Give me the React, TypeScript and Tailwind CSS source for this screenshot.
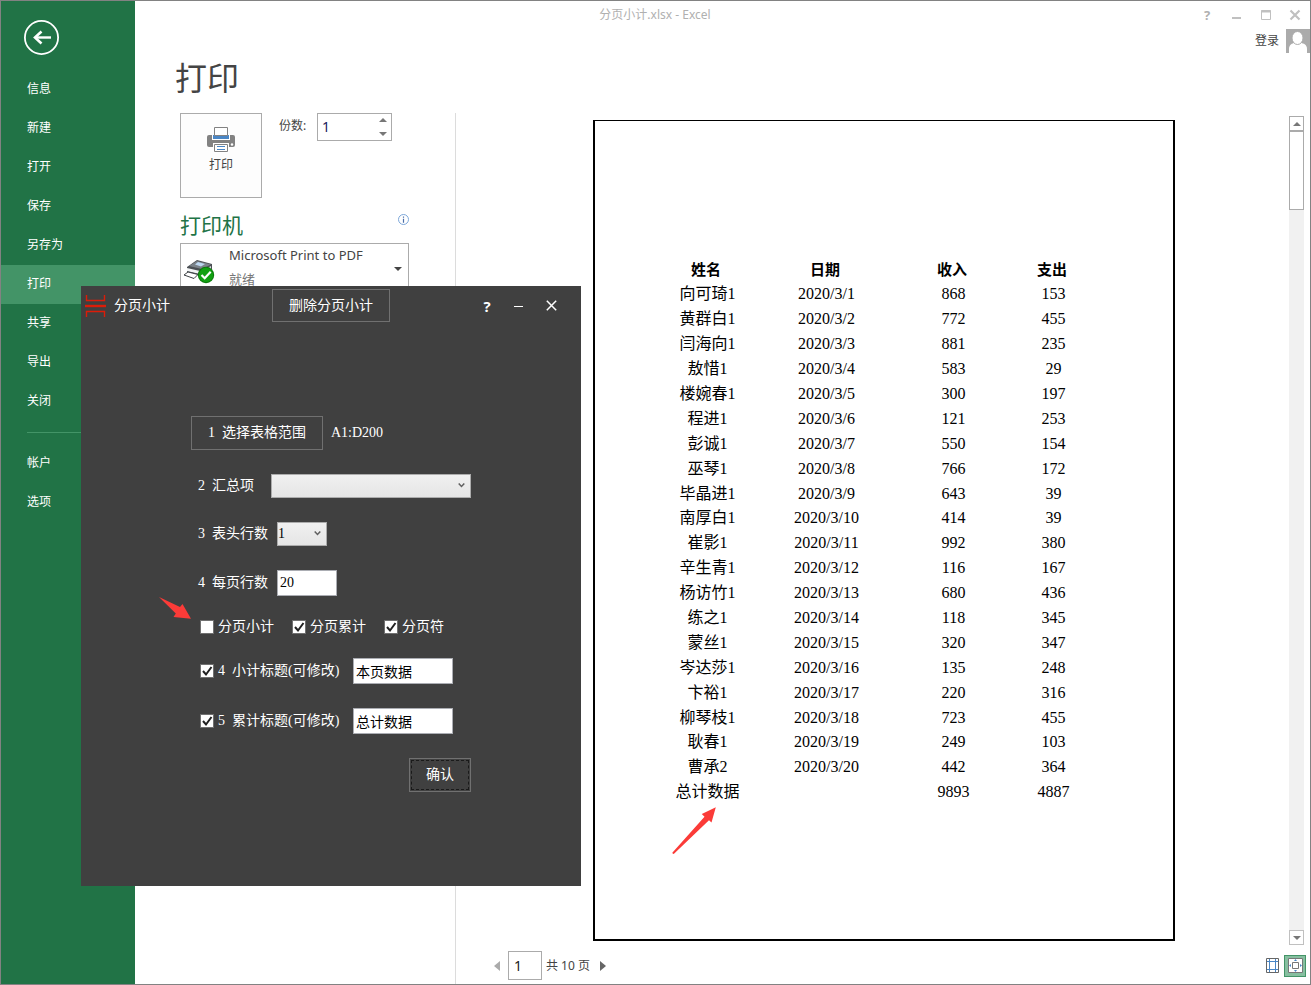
import { useState } from "react";
import type { ReactNode } from "react";

const menu = ["信息", "新建", "打开", "保存", "另存为", "打印", "共享", "导出", "关闭"];
const accountMenu = ["帐户", "选项"];

const rows = [
  ["向可琦1", "2020/3/1", "868", "153"],
  ["黄群白1", "2020/3/2", "772", "455"],
  ["闫海向1", "2020/3/3", "881", "235"],
  ["敖惜1", "2020/3/4", "583", "29"],
  ["楼婉春1", "2020/3/5", "300", "197"],
  ["程进1", "2020/3/6", "121", "253"],
  ["彭诚1", "2020/3/7", "550", "154"],
  ["巫琴1", "2020/3/8", "766", "172"],
  ["毕晶进1", "2020/3/9", "643", "39"],
  ["南厚白1", "2020/3/10", "414", "39"],
  ["崔影1", "2020/3/11", "992", "380"],
  ["辛生青1", "2020/3/12", "116", "167"],
  ["杨访竹1", "2020/3/13", "680", "436"],
  ["练之1", "2020/3/14", "118", "345"],
  ["蒙丝1", "2020/3/15", "320", "347"],
  ["岑达莎1", "2020/3/16", "135", "248"],
  ["卞裕1", "2020/3/17", "220", "316"],
  ["柳琴枝1", "2020/3/18", "723", "455"],
  ["耿春1", "2020/3/19", "249", "103"],
  ["曹承2", "2020/3/20", "442", "364"],
  ["总计数据", "", "9893", "4887"],
];

function MenuItem({ label, active }: { label: string; active?: boolean }) {
  return (
    <a
      href="#"
      aria-current={active ? "page" : undefined}
      className={`flex h-[39px] items-center pb-[2px] pl-[26px] text-xs text-white ${active ? "bg-[#439467]" : ""}`}
    >
      {label}
    </a>
  );
}

function Sidebar() {
  return (
    <aside className="w-[134px] shrink-0 bg-[#217346] pt-[19px]">
      <button aria-label="返回" className="mb-[14px] ml-[23px] block">
        <svg width="36" height="36" viewBox="0 0 36 36" fill="none" stroke="#fff">
          <circle cx="17.5" cy="17.5" r="16.6" strokeWidth="1.8" />
          <path d="M27 17.5H11.5" strokeWidth="2.4" />
          <path d="M17.5 11.5L11 17.5L17.5 23.5" strokeWidth="2.6" />
        </svg>
      </button>
      <nav>
        {menu.map((m) => (
          <MenuItem key={m} label={m} active={m === "打印"} />
        ))}
        <hr className="my-[11px] ml-[26px] mr-[25px] border-[#439467]" />
        {accountMenu.map((m) => (
          <MenuItem key={m} label={m} />
        ))}
      </nav>
    </aside>
  );
}

function TitleBar() {
  return (
    <header className="grid h-7 grid-cols-[1fr_135px] items-center text-[#b0b0b0]">
      <div className="text-center text-xs">分页小计.xlsx - Excel</div>
      <div className="flex items-center justify-between pl-[26px] pr-[9px]">
        <button aria-label="帮助" className="w-3 text-[13px] leading-4 font-bold">?</button>
        <button aria-label="最小化">
          <svg width="13" height="12" viewBox="0 0 13 12"><path d="M2 8h9v2H2z" fill="#c0c0c0" /></svg>
        </button>
        <button aria-label="最大化">
          <svg width="12" height="12" viewBox="0 0 12 12" fill="none" stroke="#c0c0c0">
            <path d="M1.5 1.5h9v9h-9z" />
            <path d="M1 2.5h10" strokeWidth="2" />
          </svg>
        </button>
        <button aria-label="关闭窗口">
          <svg width="12" height="12" viewBox="0 0 12 12" stroke="#c0c0c0" strokeWidth="2.2">
            <path d="M1.5 1.5l9 9M10.5 1.5l-9 9" />
          </svg>
        </button>
      </div>
    </header>
  );
}

function PrinterIcon() {
  return (
    <svg width="28" height="26" viewBox="0 0 28 26">
      <rect x="0" y="8" width="28" height="12" rx="2" fill="#828282" />
      <path d="M5 7h18v6H5z" fill="#fff" />
      <path d="M6 8h16v4H6z" fill="#4a86c5" />
      <path d="M7.5.5h13v8h-13z" fill="#fff" stroke="#828282" />
      <circle cx="25" cy="17.5" r="1.2" fill="#fff" />
      <path d="M6 16h16v10H6z" fill="#fff" />
      <path d="M7.5 17.5h13v7h-13z" fill="#fff" stroke="#828282" />
      <path d="M10 19.5h8M10 22.5h8" stroke="#4a86c5" />
    </svg>
  );
}

function DeviceIcon() {
  return (
    <svg width="32" height="25" viewBox="0 0 32 25" className="mt-[6px]">
      <path d="M3 7L13 0l15 4v5l-11 7L3 12z" fill="#4b4f54" />
      <path d="M5 6l8-5 14 3.5L18 9z" fill="#7b8288" />
      <path d="M11 4.500l3-2.500 7 2-4 2.500z" fill="#bcd6f0" />
      <path d="M3 8l13 3v3L3 11z" fill="#f2f4f5" />
      <path d="M0 15l4-3 10 2.500-4 4z" fill="#fff" stroke="#3c4044" />
      <path d="M17 11l10-5v3l-10 6z" fill="#d7dadd" />
      <circle cx="22" cy="15" r="8.200" fill="#0b7a0b" />
      <circle cx="22" cy="15" r="7.200" fill="#12a012" />
      <path d="M17.500 15l3.200 3.200 6-6.400" fill="none" stroke="#fff" strokeWidth="2.200" />
    </svg>
  );
}

function Triangle({ d, color }: { d: "up" | "down" | "left" | "right"; color: string }) {
  const paths = { up: "M0 4L4 0L8 4z", down: "M0 0h8L4 4z", left: "M6 0v10L0 5z", right: "M0 0v10L6 5z" };
  const side = d === "left" || d === "right";
  return (
    <svg width={side ? 6 : 8} height={side ? 10 : 4} fill={color}>
      <path d={paths[d]} />
    </svg>
  );
}

function Settings() {
  const [copies, setCopies] = useState(1);
  return (
    <section className="w-[321px] shrink-0 border-r border-[#dcdcdc] pl-[45px]">
      <div className="flex items-start">
        <button className="flex h-[85px] w-[82px] flex-col items-center border border-[#ababab] bg-[#fdfdfd] pt-[13px] text-xs text-[#444]">
          <PrinterIcon />
          <span className="mt-1">打印</span>
        </button>
        <label htmlFor="copies" className="ml-[17px] mt-[5px] w-[38px] text-xs text-[#444]">份数:</label>
        <div className="flex h-7 w-[75px] border border-[#ababab]">
          <input
            id="copies"
            value={copies}
            onChange={(e) => setCopies(Number(e.target.value) || 1)}
            className="w-0 flex-1 pl-1 text-sm text-[#1a1a5c] outline-none"
          />
          <div className="flex w-4 flex-col items-center justify-between py-1">
            <button aria-label="增加" onClick={() => setCopies(copies + 1)} className="flex"><Triangle d="up" color="#777" /></button>
            <button aria-label="减少" onClick={() => setCopies(Math.max(1, copies - 1))} className="flex"><Triangle d="down" color="#777" /></button>
          </div>
        </div>
      </div>
      <div className="mt-[11px] flex h-8 w-[229px] items-center justify-between">
        <h2 className="text-[21px] leading-8 text-[#217346]">打印机</h2>
        <svg width="11" height="11" viewBox="0 0 11 11" fill="none" className="mb-3">
          <circle cx="5.5" cy="5.5" r="5" stroke="#7da7d9" />
          <path d="M5.5 2.5v1.2M5.5 4.8v4" stroke="#4a6ea9" strokeWidth="1.2" />
        </svg>
      </div>
      <button aria-haspopup="listbox" className="mt-[2px] flex h-[52px] w-[229px] items-center border border-[#ababab] pl-[3px] pr-[6px] text-left text-[#444]">
        <DeviceIcon />
        <span className="ml-[13px] flex-1 pb-1">
          <span className="block text-[13px] leading-6">Microsoft Print to PDF</span>
          <span className="block text-[13px] leading-6 text-[#777]">就绪</span>
        </span>
        <Triangle d="down" color="#444" />
      </button>
    </section>
  );
}

function Sheet() {
  return (
    <div className="relative mx-auto w-[582px] border-2 border-t border-black bg-white pt-[137px] font-['Liberation_Serif','Noto_Sans_CJK_SC',serif] text-base leading-6 text-black">
      <table className="ml-[71px] h-[547px] w-[438px] table-fixed text-center">
        <colgroup>
          <col className="w-[84px]" />
          <col className="w-[154px]" />
          <col className="w-[100px]" />
          <col className="w-[100px]" />
        </colgroup>
        <thead>
          <tr>
            {["姓名", "日期", "收入", "支出"].map((h) => (
              <th key={h} className="p-0 pr-[3px] text-[15px]">{h}</th>
            ))}
          </tr>
        </thead>
        <tbody>
          {rows.map((r) => (
            <tr key={r[0]}>
              {r.map((c, i) => (
                <td key={i} className="p-0">{c}</td>
              ))}
            </tr>
          ))}
        </tbody>
      </table>
      <svg width="46" height="48" viewBox="0 0 46 48" fill="#fb3b38" className="absolute left-[77px] top-[686px]">
        <path d="M1 47L.3 45.8L32.5 9.8L29.8 7L43.8.3L39.5 15.6L37 13.2L2 46.7z" />
      </svg>
    </div>
  );
}

function ScrollBar() {
  return (
    <div className="mt-[3px] flex w-[15px] flex-col bg-[#f1f1f1]">
      <button aria-label="向上滚动" className="flex h-[15px] items-center justify-center border border-[#ababab] bg-white">
        <Triangle d="up" color="#777" />
      </button>
      <div className="h-[79px] border border-[#ababab] bg-white" />
      <button aria-label="向下滚动" className="mt-auto flex h-[15px] items-center justify-center border border-[#c0c0c0] bg-white">
        <Triangle d="down" color="#777" />
      </button>
    </div>
  );
}

function Preview() {
  return (
    <section className="flex min-w-0 flex-1 flex-col">
      <div className="flex flex-1 pr-[6px]">
        <div className="flex flex-1 pb-1 pl-[22px] pt-[7px]">
          <Sheet />
        </div>
        <ScrollBar />
      </div>
      <div className="mb-1 mt-[6px] flex h-[29px] items-center pl-[38px] pr-1 text-[13px] text-[#444]">
        <button aria-label="上一页"><Triangle d="left" color="#ababab" /></button>
        <input
          aria-label="页码"
          defaultValue="1"
          className="ml-2 h-[29px] w-[34px] border border-[#ababab] pl-[5px] text-sm text-[#1a1a1a] outline-none"
        />
        <span className="ml-1 text-xs">共 10 页</span>
        <button aria-label="下一页" className="ml-[10px]"><Triangle d="right" color="#666" /></button>
        <button aria-label="显示边距" className="ml-auto">
          <svg width="13" height="15" viewBox="0 0 13 15" fill="none">
            <path d="M3.5 1v13M9.5 1v13M1 3.5h11M1 11.5h11" stroke="#4a86c5" />
            <path d="M.5.5h12v14H.5z" stroke="#666" />
          </svg>
        </button>
        <button aria-label="缩放到页面" className="ml-[5px] flex h-[22px] w-[22px] items-center justify-center border border-[#439467] bg-[#86bfa0]">
          <svg width="15" height="15" viewBox="0 0 15 15" fill="none">
            <path d="M.5.5h14v14H.5z" fill="#fff" stroke="#777" />
            <path d="M4.5 4.5h6v6h-6z" stroke="#777" />
            <path d="M6 3h3L7.5 1zM6 12h3l-1.500 2zM3 6v3L1 7.500zM12 6v3l2-1.500z" fill="#4a86c5" />
          </svg>
        </button>
      </div>
    </section>
  );
}

function Check({ id, children, checked }: { id: string; children: ReactNode; checked?: boolean }) {
  return (
    <span className="flex items-center">
      <span className="relative flex">
        <input
          id={id}
          type="checkbox"
          defaultChecked={checked}
          className="peer h-[14px] w-[14px] appearance-none border border-[#707070] bg-white"
        />
        <svg viewBox="0 0 14 14" fill="none" stroke="#212121" strokeWidth="2" className="pointer-events-none absolute inset-0 hidden peer-checked:block">
          <path d="M3 7l3 3.500l5.500-7.500" />
        </svg>
      </span>
      <label htmlFor={id} className="flex gap-[7px] pl-1">{children}</label>
    </span>
  );
}

function Drop({ id, value, className }: { id: string; value: string; className: string }) {
  return (
    <div className={`relative h-6 ${className}`}>
      <select
        id={id}
        defaultValue={value}
        className="h-full w-full appearance-none border border-[#acacac] bg-gradient-to-b from-[#f0f0f0] to-[#e5e5e5] text-black outline-none"
      >
        <option>{value}</option>
      </select>
      <svg width="7" height="5" viewBox="0 0 7 5" fill="none" stroke="#606060" strokeWidth="1.500" className="pointer-events-none absolute right-[6px] top-[9px]">
        <path d="M.7.5l2.800 3l2.800-3" />
      </svg>
    </div>
  );
}

function SubtotalDialog() {
  return (
    <div
      role="dialog"
      aria-label="分页小计"
      className="absolute left-[80px] top-[285px] h-[600px] w-[500px] bg-[#404040] font-['Liberation_Serif','Noto_Sans_CJK_SC',serif] text-sm leading-5 text-white"
    >
      <div className="flex h-9 items-center pl-1 pt-[3px]">
        <svg width="21" height="22" viewBox="0 0 21 22" fill="none" stroke="#dd1c08">
          <path d="M1.500 0v5.500h18V0M1.500 22v-5.500h18V22" strokeWidth="1.400" />
          <path d="M0 11h21" strokeWidth="2.400" />
        </svg>
        <span className="ml-2 flex-1">分页小计</span>
        <button className="mr-[82px] h-[33px] w-[118px] border border-[#707070]">删除分页小计</button>
        <button aria-label="帮助" className="w-[30px] font-['Open_Sans',sans-serif] text-[15px] font-bold">?</button>
        <button aria-label="最小化" className="flex w-[34px] justify-center">
          <svg width="10" height="10" stroke="#fff"><path d="M0 5.500h9" /></svg>
        </button>
        <button aria-label="关闭" className="mr-[15px] flex w-[30px] justify-center">
          <svg width="11" height="11" viewBox="0 0 11 11" stroke="#fff" strokeWidth="1.500"><path d="M.8.800l9.400 9.400M10.200.800l-9.400 9.400" /></svg>
        </button>
      </div>
      <form className="flex flex-col gap-6 pl-[110px] pt-[94px]" onSubmit={(e) => e.preventDefault()}>
        <div className="flex h-[34px] items-center">
          <button type="button" className="flex h-full w-[132px] items-center justify-center gap-[7px] border border-[#707070]">
            <span>1</span>选择表格范围
          </button>
          <span className="ml-2">A1:D200</span>
        </div>
        <div className="flex h-6 items-center pl-[7px]">
          <label htmlFor="sum" className="mr-[17px] flex gap-[7px]"><span>2</span>汇总项</label>
          <Drop id="sum" value="" className="w-[200px]" />
        </div>
        <div className="flex h-6 items-center pl-[7px]">
          <label htmlFor="head" className="mr-[9px] flex gap-[7px]"><span>3</span>表头行数</label>
          <Drop id="head" value="1" className="w-[50px]" />
        </div>
        <div className="flex h-[26px] items-center pl-[7px]">
          <label htmlFor="perpage" className="mr-[9px] flex gap-[7px]"><span>4</span>每页行数</label>
          <input id="perpage" defaultValue="20" className="h-full w-[60px] border border-[#abadb3] bg-white pl-[2px] text-black outline-none" />
        </div>
        <div className="flex h-[14px] items-center gap-[18px] pl-[9px]">
          <Check id="sub">分页小计</Check>
          <Check id="acc" checked>分页累计</Check>
          <Check id="brk" checked>分页符</Check>
        </div>
        <div className="flex h-[26px] items-center pl-[9px]">
          <div className="w-[153px]"><Check id="t1" checked><span>4</span>小计标题(可修改)</Check></div>
          <input aria-label="小计标题" defaultValue="本页数据" className="h-full w-[100px] border border-[#abadb3] bg-white pl-[2px] text-black outline-none" />
        </div>
        <div className="flex h-[26px] items-center pl-[9px]">
          <div className="w-[153px]"><Check id="t2" checked><span>5</span>累计标题(可修改)</Check></div>
          <input aria-label="累计标题" defaultValue="总计数据" className="h-full w-[100px] border border-[#abadb3] bg-white pl-[2px] text-black outline-none" />
        </div>
        <button className="ml-[218px] h-[34px] w-[62px] border border-[#707070] p-px">
          <span className="flex h-full items-center justify-center border border-dashed border-[#1a1a1a]">确认</span>
        </button>
      </form>
      <svg width="33" height="23" viewBox="0 0 33 23" fill="#fb3b38" className="absolute left-[78px] top-[311px]">
        <path d="M0 0L21 10L23.500 7L32 21.700L14.500 20L16.800 16.500z" />
      </svg>
    </div>
  );
}

export default function App() {
  return (
    <div className="relative flex min-h-screen border border-[#828282] bg-white font-['Noto_Sans','Noto_Sans_CJK_SC',sans-serif]">
      <Sidebar />
      <main className="flex min-w-0 flex-1 flex-col">
        <TitleBar />
        <div className="flex h-6 items-center justify-end gap-[7px] text-xs text-[#444]">
          <a href="#">登录</a>
          <svg width="24" height="24" viewBox="0 0 24 24">
            <path d="M0 0h24v24H0z" fill="#ababab" />
            <path d="M3 24v-4c0-4 3-6 6-6h5c4 0 7 2 7 6v4z" fill="#fff" />
            <ellipse cx="11.500" cy="9" rx="5.500" ry="6.500" fill="#fff" stroke="#ababab" />
          </svg>
        </div>
        <h1 className="mb-[10px] ml-[40px] text-[32px] leading-[50px] text-[#444]">打印</h1>
        <div className="flex flex-1">
          <Settings />
          <Preview />
        </div>
      </main>
      <SubtotalDialog />
    </div>
  );
}
